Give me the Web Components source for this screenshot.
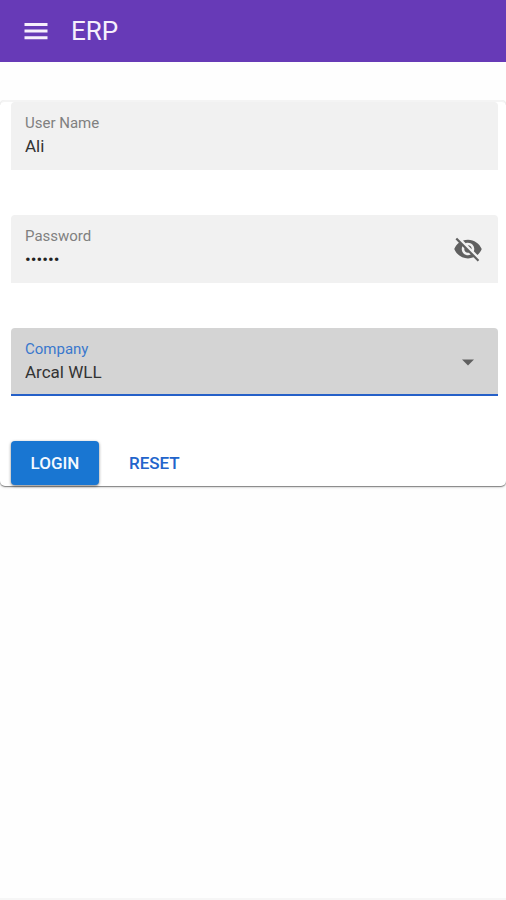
<!DOCTYPE html>
<html lang="en">
<head>
<meta charset="utf-8">
<meta name="viewport" content="width=device-width, initial-scale=1">
<title>ERP</title>
<style>
  html { height: 100%; }
  body { margin: 0; min-height: 100%; background: #fefefe; font-family: Roboto, "Liberation Sans", sans-serif; color: #333; }
</style>
</head>
<body>
<erp-app></erp-app>

<script>
class ErpToolbar extends HTMLElement {
  constructor() {
    super();
    this.attachShadow({ mode: "open" }).innerHTML = `
      <style>
        :host { display: block; background: #673ab7; color: #f6effc; }
        header { display: flex; align-items: center; gap: 15px; height: 62px; padding: 0 16px; box-sizing: border-box; }
        button { display: flex; align-items: center; justify-content: center; width: 40px; height: 40px; padding: 0; border: 0; background: none; color: inherit; cursor: pointer; }
        svg { width: 32px; height: 32px; flex: none; fill: currentColor; }
        h1 { margin: 0; font-size: 26px; line-height: 32px; font-weight: 400; }
      </style>
      <header>
        <button type="button" aria-label="Menu">
          <svg viewBox="0 0 32 32"><path d="M4.5 8h23v3h-23zM4.5 14.6h23v3h-23zM4.5 21.2h23v3h-23z"/></svg>
        </button>
        <h1><slot></slot></h1>
      </header>`;
  }
}

const fieldStyles = `
  :host { display: block; }
  .field { display: flex; align-items: center; height: 68px; padding: 0 14px; box-sizing: border-box; background: #f1f1f1; border-radius: 4px 4px 0 0; }
  .text { display: flex; flex-direction: column; flex: 1; min-width: 0; padding-top: 1px; }
  label { font-size: 15px; line-height: 18px; color: #808080; }
  input, select { width: 100%; height: 28px; margin: 0; padding: 0; border: 0; outline: 0; background: none; appearance: none; font: 400 17px/28px Roboto, "Liberation Sans", sans-serif; color: #333; }
  svg { width: 32px; height: 32px; flex: none; display: block; }`;

class ErpTextField extends HTMLElement {
  connectedCallback() {
    if (this.shadowRoot) return;
    const type = this.getAttribute("type") || "text";
    this.attachShadow({ mode: "open" }).innerHTML = `
      <style>${fieldStyles}
        input[type="password"] { color: #222; }
      </style>
      <div class="field">
        <div class="text">
          <label for="control"></label>
          <input id="control" type="${type}" autocomplete="off">
        </div>
        <slot name="trailing"></slot>
      </div>`;
    this.shadowRoot.querySelector("label").textContent = this.getAttribute("label");
    this.shadowRoot.querySelector("input").value = this.getAttribute("value") || "";
  }
}

class ErpVisibilityToggle extends HTMLElement {
  constructor() {
    super();
    this.attachShadow({ mode: "open" }).innerHTML = `
      <style>
        :host { display: block; }
        button { display: block; padding: 1px; border: 0; background: none; color: #606060; cursor: pointer; }
        svg { display: block; width: 30px; height: 30px; fill: currentColor; }
      </style>
      <button type="button" aria-label="Show password">
        <svg viewBox="0 0 24 24"><path d="M12 7c2.76 0 5 2.24 5 5 0 .65-.13 1.26-.36 1.83l2.92 2.92c1.51-1.26 2.7-2.89 3.43-4.75-1.73-4.39-6-7.5-11-7.5-1.4 0-2.74.25-3.98.7l2.16 2.16C10.74 7.13 11.35 7 12 7zM2 4.27l2.28 2.28.46.46C3.08 8.3 1.78 10.02 1 12c1.73 4.39 6 7.5 11 7.5 1.55 0 3.03-.3 4.38-.84l.42.42L19.73 22 21 20.73 3.27 3 2 4.27zM7.53 9.8l1.55 1.55c-.05.21-.08.43-.08.65 0 1.66 1.34 3 3 3 .22 0 .44-.03.65-.08l1.55 1.55c-.67.33-1.41.53-2.2.53-2.76 0-5-2.24-5-5 0-.79.2-1.53.53-2.2zm4.31-.78l3.15 3.15.02-.16c0-1.66-1.34-3-3-3l-.17.01z"/></svg>
      </button>`;
  }
}

class ErpSelect extends HTMLElement {
  connectedCallback() {
    if (this.shadowRoot) return;
    this.attachShadow({ mode: "open" }).innerHTML = `
      <style>${fieldStyles}
        .field { background: #d4d4d4; box-shadow: inset 0 -2px #2560c8; }
        label { color: #3a78cd; }
        svg { fill: #606060; }
      </style>
      <div class="field">
        <div class="text">
          <label for="control"></label>
          <select id="control"><option></option></select>
        </div>
        <svg viewBox="0 0 32 32" aria-hidden="true"><path d="M10 13.5h12l-6 6z"/></svg>
      </div>`;
    this.shadowRoot.querySelector("label").textContent = this.getAttribute("label");
    this.shadowRoot.querySelector("option").textContent = this.getAttribute("value");
  }
}

class ErpButton extends HTMLElement {
  constructor() {
    super();
    this.attachShadow({ mode: "open" }).innerHTML = `
      <style>
        :host { display: block; }
        button { display: block; min-width: 88px; height: 44px; padding: 0 19px; border: 0; border-radius: 4px; background: none; color: #2264cb; font: 500 17px/44px Roboto, "Liberation Sans", sans-serif; cursor: pointer; }
        :host([raised]) button { background: #1976d2; color: #f4f9ff; box-shadow: 0 1px 3px rgba(0, 0, 0, .5); }
      </style>
      <button type="button"><slot></slot></button>`;
  }
}

class ErpCard extends HTMLElement {
  constructor() {
    super();
    this.attachShadow({ mode: "open" }).innerHTML = `
      <style>
        :host { display: block; background: #fff; border-top: 2px solid #f4f4f4; border-radius: 5px; box-shadow: 0 1px 1px rgba(0, 0, 0, .4), 0 1px 3px rgba(0, 0, 0, .2); clip-path: inset(0 0 -8px 0); }
        form { display: flex; flex-direction: column; gap: 45px; padding: 0 8px 1px 11px; }
      </style>
      <form><slot></slot></form>`;
  }
}

class ErpApp extends HTMLElement {
  constructor() {
    super();
    this.attachShadow({ mode: "open" }).innerHTML = `
      <style>
        :host { display: flex; flex-direction: column; min-height: 100vh; box-sizing: border-box; border-bottom: 2px solid #f6f6f6; }
        main { padding-top: 38px; }
        .actions { display: flex; gap: 11px; }
      </style>
      <erp-toolbar>ERP</erp-toolbar>
      <main>
        <erp-card>
          <erp-text-field label="User Name" value="Ali"></erp-text-field>
          <erp-text-field label="Password" type="password" value="secret">
            <erp-visibility-toggle slot="trailing"></erp-visibility-toggle>
          </erp-text-field>
          <erp-select label="Company" value="Arcal WLL"></erp-select>
          <div class="actions">
            <erp-button raised>LOGIN</erp-button>
            <erp-button>RESET</erp-button>
          </div>
        </erp-card>
      </main>`;
  }
}

customElements.define("erp-toolbar", ErpToolbar);
customElements.define("erp-text-field", ErpTextField);
customElements.define("erp-visibility-toggle", ErpVisibilityToggle);
customElements.define("erp-select", ErpSelect);
customElements.define("erp-button", ErpButton);
customElements.define("erp-card", ErpCard);
customElements.define("erp-app", ErpApp);
</script>
</body>
</html>
